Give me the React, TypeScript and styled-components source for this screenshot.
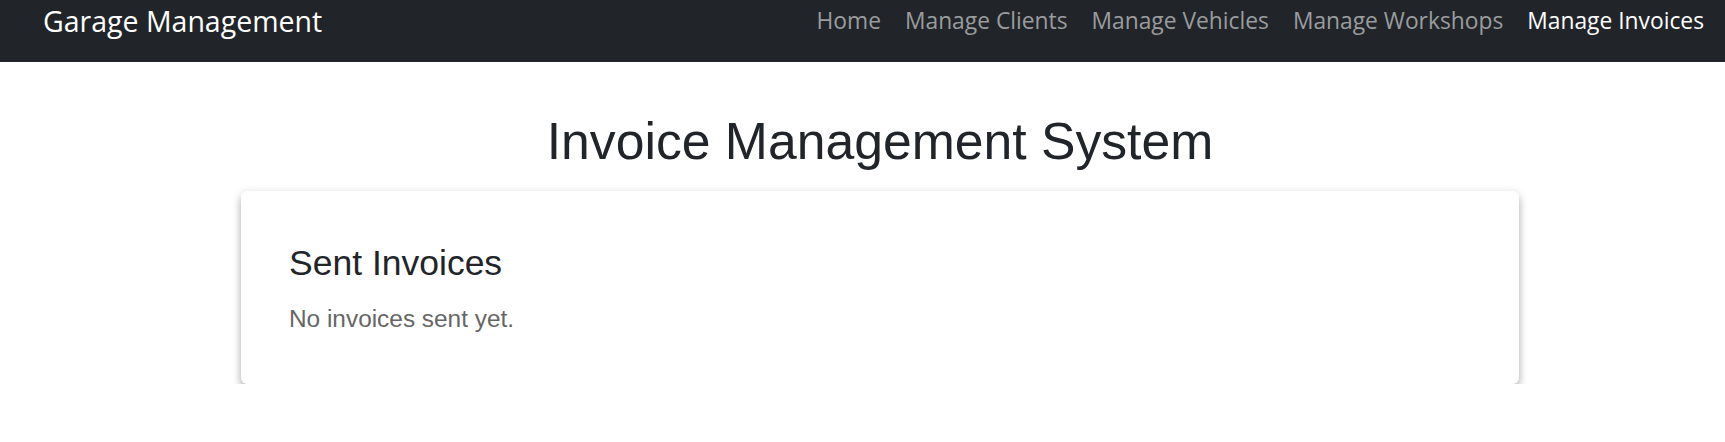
import React from "react";
import styled, { createGlobalStyle } from "styled-components";

const links = [
  { label: "Home", active: false },
  { label: "Manage Clients", active: false },
  { label: "Manage Vehicles", active: false },
  { label: "Manage Workshops", active: false },
  { label: "Manage Invoices", active: true },
];

const GlobalStyle = createGlobalStyle`
  * {
    box-sizing: border-box;
  }

  body {
    margin: 0;
    background: #ffffff;
    font-family: "Liberation Sans", Arial, sans-serif;
    color: #212529;
  }
`;

export default function App() {
  return (
    <>
      <GlobalStyle />
      <Navbar>
        <Brand href="#">Garage Management</Brand>
        <NavList>
          {links.map((link) => (
            <li key={link.label}>
              <NavLink href="#" $active={link.active}>
                {link.label}
              </NavLink>
            </li>
          ))}
        </NavList>
      </Navbar>
      <Main>
        <PageTitle>Invoice Management System</PageTitle>
        <Card>
          <CardTitle>Sent Invoices</CardTitle>
          <EmptyText>No invoices sent yet.</EmptyText>
        </Card>
      </Main>
    </>
  );
}

const Navbar = styled.nav`
  display: flex;
  align-items: flex-start;
  justify-content: space-between;

  height: 62px;
  padding: 7px 9px 0 43px;

  background: #212529;
  font-family: "Open Sans", "Noto Sans", sans-serif;
`;

const Brand = styled.a`
  color: #ffffff;
  font-size: 28.5px;
  line-height: 1;
  text-decoration: none;
`;

const NavList = styled.ul`
  display: flex;
  margin: 3px 0 0;
  padding: 0;
  list-style: none;
`;

const NavLink = styled.a<{ $active: boolean }>`
  display: block;
  padding: 0 12px;

  color: ${({ $active }) => ($active ? "#ffffff" : "#9a9c9e")};
  font-size: 22.8px;
  line-height: 1;
  text-decoration: none;
`;

const Main = styled.main`
  padding: 48px 206px 0 241px;
`;

const PageTitle = styled.h1`
  margin: 0 0 19px;

  font-size: 51.7px;
  font-weight: 400;
  line-height: 1.2;
  text-align: center;
  color: #212529;
`;

const Card = styled.section`
  padding: 51px 48px 47px;

  background: #ffffff;
  border-radius: 6px;
  box-shadow: 0 5px 9px rgba(0, 0, 0, 0.3), 0 0 10px rgba(0, 0, 0, 0.06);
`;

const CardTitle = styled.h2`
  margin: 0 0 16px;

  font-size: 35.5px;
  font-weight: 400;
  line-height: 1.2;
  color: #212529;
`;

const EmptyText = styled.p`
  margin: 0;

  font-size: 24.4px;
  line-height: 1.5;
  color: #666666;
`;
